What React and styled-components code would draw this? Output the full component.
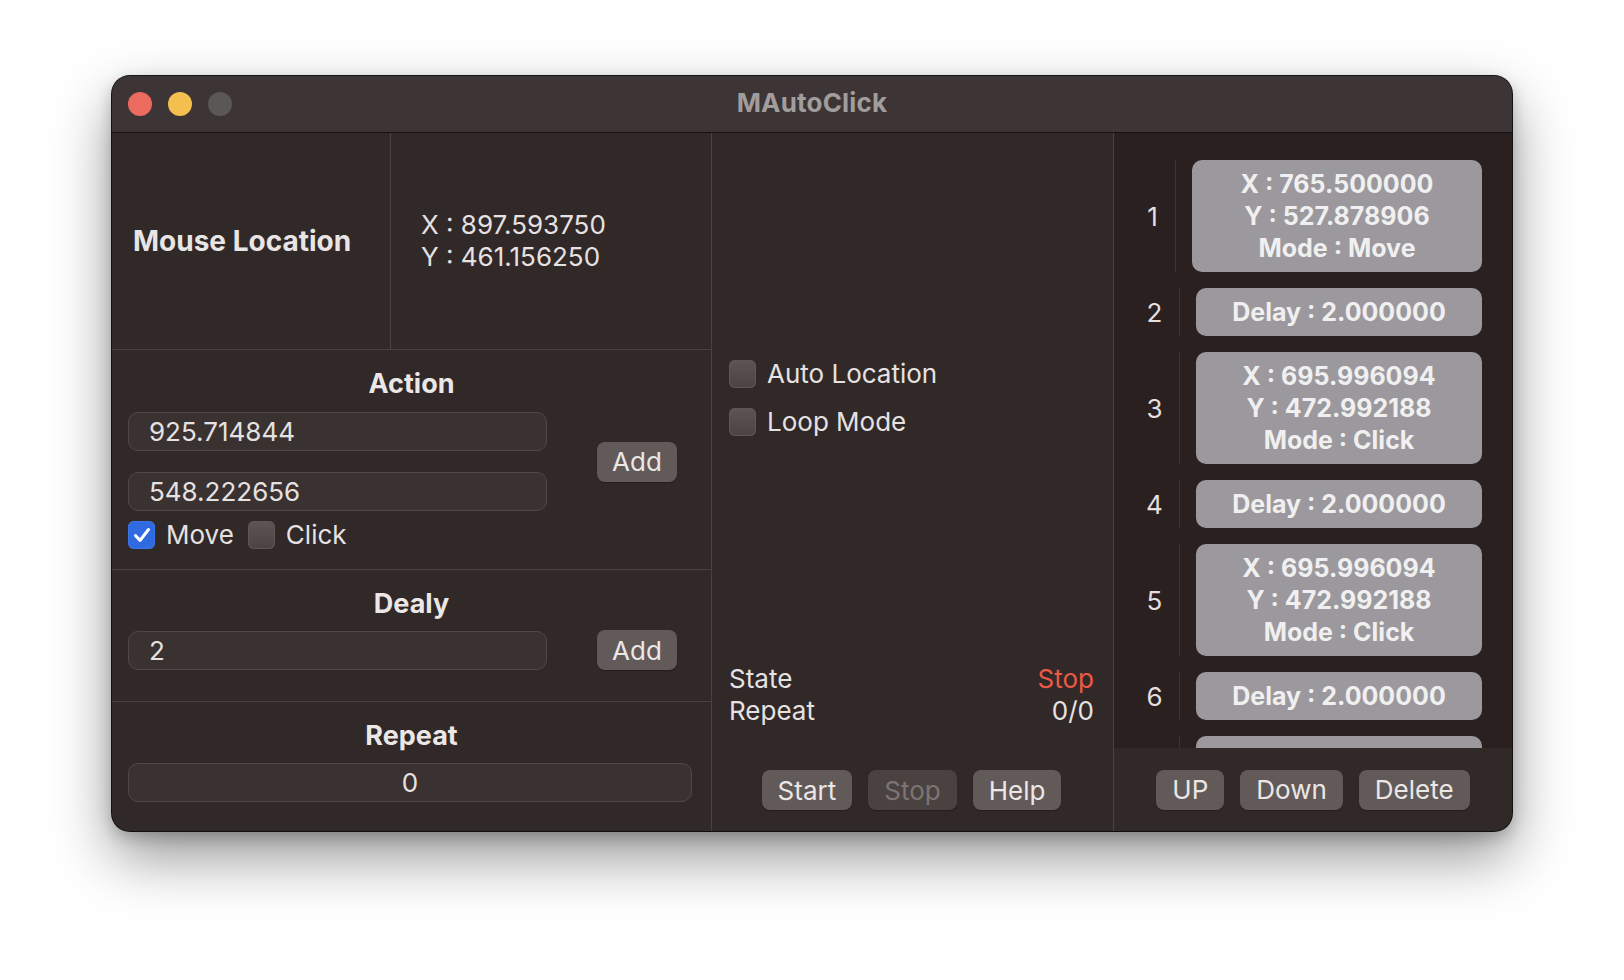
import React from 'react'
import styled, { createGlobalStyle } from 'styled-components'

const GlobalStyle = createGlobalStyle`
  html, body {
    margin: 0;
    padding: 0;
    background: #ffffff;
  }
  body {
    font-family: Inter, "Helvetica Neue", "Liberation Sans", Arial, sans-serif;
    -webkit-font-smoothing: antialiased;
  }
`

const Page = styled.div`
  width: 1624px;
  height: 980px;
  box-sizing: border-box;
  padding-top: 76px;
  display: flex;
  justify-content: center;
  align-items: flex-start;
  background: #ffffff;
`

const Window = styled.div`
  width: 1400px;
  height: 755px;
  border-radius: 18px;
  overflow: hidden;
  display: flex;
  flex-direction: column;
  background: #312828;
  box-shadow: 0 0 0 1px rgba(0, 0, 0, 0.9), 0 26px 60px rgba(0, 0, 0, 0.42),
    0 6px 16px rgba(0, 0, 0, 0.22);
`

const TitleBar = styled.div`
  height: 56px;
  flex: none;
  display: grid;
  grid-template-columns: 1fr auto 1fr;
  align-items: center;
  background: #3d3535;
  border-bottom: 1px solid #161111;
`

const Lights = styled.div`
  display: flex;
  gap: 16px;
  padding-left: 16px;
`

const Light = styled.span`
  width: 24px;
  height: 24px;
  border-radius: 50%;
  background: ${(p) => p.$color};
`

const Title = styled.div`
  font-size: 26px;
  font-weight: 700;
  color: #a29d9d;
  letter-spacing: 0.2px;
  margin-top: -4px;
`

const Body = styled.div`
  flex: 1;
  display: grid;
  grid-template-columns: 600px 402px 1fr;
  min-height: 0;
`

const Column = styled.div`
  display: flex;
  flex-direction: column;
  min-height: 0;
  border-right: ${(p) => (p.$last ? 'none' : '1px solid #4a4141')};
`

const MouseSection = styled.div`
  height: 217px;
  flex: none;
  display: grid;
  grid-template-columns: 279px 1fr;
  border-bottom: 1px solid #4a4141;
  box-sizing: border-box;
`

const MouseLabel = styled.div`
  display: flex;
  align-items: center;
  padding-left: 21px;
  border-right: 1px solid #4a4141;
  font-size: 28px;
  font-weight: 700;
  color: #e9e5e5;
`

const MouseValues = styled.div`
  display: flex;
  flex-direction: column;
  justify-content: center;
  padding-left: 30px;
  font-size: 26px;
  line-height: 32px;
  color: #e6e2e1;
`

const Section = styled.div`
  height: ${(p) => p.$h}px;
  flex: none;
  box-sizing: border-box;
  padding: ${(p) => p.$top}px 34px 0 16px;
  border-bottom: ${(p) => (p.$last ? 'none' : '1px solid #4a4141')};
  display: flex;
  flex-direction: column;
`

const Heading = styled.div`
  text-align: center;
  font-size: 27px;
  line-height: 34px;
  font-weight: 700;
  color: #ebe7e7;
  margin: 0 -18px ${(p) => p.$gap}px 0;
`

const ActionGrid = styled.div`
  display: grid;
  grid-template-columns: 419px 1fr;
  grid-template-rows: 39px 39px auto;
  row-gap: 21px;
  align-items: center;
`

const Field = styled.input`
  width: ${(p) => p.$w || 419}px;
  height: 39px;
  box-sizing: border-box;
  margin: 0;
  padding: 0 20px;
  border: 1px solid #504747;
  border-radius: 10px;
  background: #3a3131;
  color: #e6e2e1;
  font-family: inherit;
  font-size: 26px;
  text-align: ${(p) => (p.$center ? 'center' : 'left')};
  outline: none;
`

const Button = styled.button`
  height: 40px;
  box-sizing: border-box;
  margin: 0;
  padding: 0 ${(p) => p.$pad || 16}px;
  border: none;
  border-radius: 8px;
  background: ${(p) => (p.$disabled ? '#4a4240' : '#625a58')};
  color: ${(p) => (p.$disabled ? '#7c7573' : '#ebe7e6')};
  font-family: inherit;
  font-size: 26px;
  box-shadow: 0 1px 1px rgba(0, 0, 0, 0.25);
`

const AddButton = styled(Button)`
  grid-column: 2;
  grid-row: ${(p) => p.$row || 'auto'};
  justify-self: end;
  width: 80px;
  padding: 0;
`

const CheckRow = styled.div`
  grid-column: 1;
  display: flex;
  align-items: center;
  gap: 14px;
  margin-top: -12px;
`

const CheckItem = styled.label`
  display: flex;
  align-items: center;
  gap: 11px;
  font-size: 26px;
  line-height: 30px;
  color: #e6e2e1;
`

const Box = styled.span`
  width: 27px;
  height: 28px;
  box-sizing: border-box;
  border-radius: 6px;
  display: inline-flex;
  align-items: center;
  justify-content: center;
  background: ${(p) =>
    p.$checked ? '#2f6ae0' : 'linear-gradient(#5d5554, #4a4342)'};
  box-shadow: inset 0 0 0 1px ${(p) => (p.$checked ? '#3b74e6' : '#5e5655')};
`

const DelayRow = styled.div`
  display: flex;
  justify-content: space-between;
  align-items: center;
`

const Middle = styled(Column)`
  padding: 226px 19px 21px 17px;
`

const MiddleChecks = styled.div`
  display: flex;
  flex-direction: column;
  gap: 18px;
`

const Status = styled.div`
  margin-top: auto;
  display: grid;
  grid-template-columns: 1fr auto;
  font-size: 26px;
  line-height: 32px;
  color: #e6e2e1;
`

const StatusValue = styled.span`
  text-align: right;
  color: ${(p) => p.$color || '#e6e2e1'};
`

const ButtonRow = styled.div`
  display: flex;
  justify-content: center;
  gap: 16px;
  margin-top: ${(p) => p.$top || 0}px;
`

const List = styled.div`
  flex: 1;
  min-height: 0;
  overflow: hidden;
  background: #2a2020;
  padding: 27px 30px 0 16px;
  display: flex;
  flex-direction: column;
  gap: 16px;
`

const Row = styled.div`
  display: flex;
  align-items: stretch;
  flex: none;
`

const RowNumber = styled.div`
  width: ${(p) => (p.$first ? 45 : 49)}px;
  display: flex;
  align-items: center;
  justify-content: center;
  border-right: 1px solid #3d3333;
  font-size: 26px;
  color: #e3dfdf;
`

const Card = styled.div`
  flex: 1;
  margin-left: 16px;
  min-height: ${(p) => p.$h}px;
  box-sizing: border-box;
  border-radius: 10px;
  background: #9b999d;
  display: flex;
  flex-direction: column;
  justify-content: center;
  text-align: center;
  font-size: 25px;
  line-height: 32px;
  font-weight: 700;
  color: #f1f0f0;
`

const BottomBar = styled.div`
  height: 83px;
  flex: none;
  display: flex;
  align-items: center;
  justify-content: center;
  gap: 16px;
`

const Check = ({ checked, children }) => (
  <CheckItem>
    <Box $checked={checked}>
      {checked && (
        <svg width="20" height="20" viewBox="0 0 20 20">
          <path
            d="M3.5 10.5 L8 15.5 L16.5 4.5"
            fill="none"
            stroke="#ffffff"
            strokeWidth="3"
            strokeLinecap="round"
            strokeLinejoin="round"
          />
        </svg>
      )}
    </Box>
    {children}
  </CheckItem>
)

// the last row is scrolled out of view, only its top edge shows
const actions = [
  { lines: ['X : 765.500000', 'Y : 527.878906', 'Mode : Move'] },
  { lines: ['Delay : 2.000000'] },
  { lines: ['X : 695.996094', 'Y : 472.992188', 'Mode : Click'] },
  { lines: ['Delay : 2.000000'] },
  { lines: ['X : 695.996094', 'Y : 472.992188', 'Mode : Click'] },
  { lines: ['Delay : 2.000000'] },
  { lines: [], hidden: true },
]

const App = () => {
  return (
    <Page>
      <GlobalStyle />
      <Window>
        <TitleBar>
          <Lights>
            <Light $color="#ec6a5e" />
            <Light $color="#f4bf4f" />
            <Light $color="#5b5757" />
          </Lights>
          <Title>MAutoClick</Title>
          <div />
        </TitleBar>

        <Body>
          <Column>
            <MouseSection>
              <MouseLabel>Mouse Location</MouseLabel>
              <MouseValues>
                <span>X : 897.593750</span>
                <span>Y : 461.156250</span>
              </MouseValues>
            </MouseSection>

            <Section $h={220} $top={17}>
              <Heading $gap={11}>Action</Heading>
              <ActionGrid>
                <Field defaultValue="925.714844" readOnly />
                <AddButton $row="1 / 3">Add</AddButton>
                <Field defaultValue="548.222656" readOnly />
                <CheckRow>
                  <Check checked>Move</Check>
                  <Check>Click</Check>
                </CheckRow>
              </ActionGrid>
            </Section>

            <Section $h={132} $top={17}>
              <Heading $gap={9}>Dealy</Heading>
              <DelayRow>
                <Field defaultValue="2" readOnly />
                <AddButton>Add</AddButton>
              </DelayRow>
            </Section>

            <Section $h={129} $top={17} $last>
              <Heading $gap={10}>Repeat</Heading>
              <Field $w={564} $center defaultValue="0" readOnly />
            </Section>
          </Column>

          <Middle>
            <MiddleChecks>
              <Check>Auto Location</Check>
              <Check>Loop Mode</Check>
            </MiddleChecks>
            <Status>
              <span>State</span>
              <StatusValue $color="#ec5a45">Stop</StatusValue>
              <span>Repeat</span>
              <StatusValue>0/0</StatusValue>
            </Status>
            <ButtonRow $top={43}>
              <Button>Start</Button>
              <Button $disabled>Stop</Button>
              <Button>Help</Button>
            </ButtonRow>
          </Middle>

          <Column $last>
            <List>
              {actions.map((a, i) => (
                <Row key={i}>
                  <RowNumber $first={i === 0}>{a.hidden ? '' : i + 1}</RowNumber>
                  <Card $h={a.lines.length === 1 || a.hidden ? 48 : 112}>
                    {a.lines.map((l) => (
                      <span key={l}>{l}</span>
                    ))}
                  </Card>
                </Row>
              ))}
            </List>
            <BottomBar>
              <Button>UP</Button>
              <Button>Down</Button>
              <Button>Delete</Button>
            </BottomBar>
          </Column>
        </Body>
      </Window>
    </Page>
  )
}

export default App
